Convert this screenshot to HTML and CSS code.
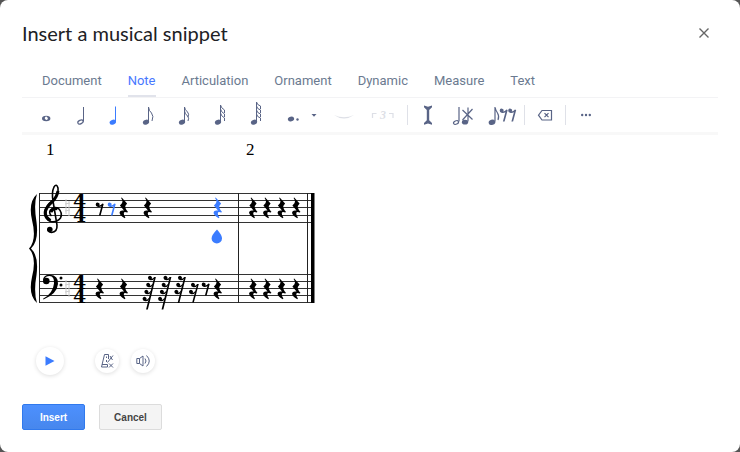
FILE: index.html
```html
<!DOCTYPE html>
<html lang="en">
<head>
<meta charset="utf-8">
<title>Insert a musical snippet</title>
<link rel="stylesheet" href="styles.css">
</head>
<body>
<svg class="defs" width="0" height="0" aria-hidden="true">
  <defs>
    <path id="quarter-rest" d="M-1.8 -10.6L3.6 -4.600Q1.200 -2 1.800 -.6Q2.400 1.400 4.400 3.800L3.900 4.600Q.6 3.400 .3 5Q0 7 1.900 9.400L1.300 10.200Q-4.200 7 -3.900 4.200Q-3.400 1.800 .5 2.600L-3.600 -2.400Q-.8 -5 -1 -6.600Q-1.200 -8.400 -2.400 -10Z"/>
    <path id="eighth-rest" d="M-3.800 -4.600A1.900 1.900 0 1 1 -.3 -3.400Q1.400 -3.500 2.900 -5.400L4.200 -5.100L1.100 6.400H-.6L1.900 -2.700Q0 -1.700 -2 -2.200Q-3.800 -3 -3.800 -4.600Z"/>
    <path id="rest-hook" d="M-4 -1A2 2 0 1 1 -.4 0Q1.200 -.4 2.200 -2L2.900 -1.600Q1.400 1.500 -1.400 1.300Q-4 .9 -4 -1Z"/>
    <g id="sixteenth-rest"><use href="#rest-hook" x="1" y="-9"/><use href="#rest-hook" x="-1" y="-2"/><path d="M3.200 -11H4.800L-.2 7.500H-1.800Z"/></g>
    <g id="thirtysecond-rest"><use href="#rest-hook" x="1" y="-9"/><use href="#rest-hook" x="-.8" y="-2"/><use href="#rest-hook" x="-2.600" y="5"/><path d="M3.200 -11H4.900L-1.700 15H-3.400Z"/></g>
    <g id="sixtyfourth-rest"><use href="#rest-hook" x="1" y="-9"/><use href="#rest-hook" x="-.8" y="-2"/><use href="#rest-hook" x="-2.600" y="5"/><use href="#rest-hook" x="-4.400" y="12"/><path d="M3.200 -11H4.900L-3.200 21.500H-4.900Z"/></g>
  </defs>
</svg>
<main class="dialog">
  <header class="dialog-header">
    <h1>Insert a musical snippet</h1>
    <button class="close" type="button" aria-label="Close"><svg width="10" height="10" viewBox="0 0 10 10"><path d="M.5 .5L9.500 9.500M9.500 .5L.5 9.500"/></svg></button>
  </header>

  <nav class="tabs" aria-label="Tools">
    <button type="button">Document</button>
    <button type="button" class="active">Note</button>
    <button type="button">Articulation</button>
    <button type="button">Ornament</button>
    <button type="button">Dynamic</button>
    <button type="button">Measure</button>
    <button type="button">Text</button>
  </nav>

  <div class="toolbar" role="toolbar" aria-label="Note tools">
    <button type="button" aria-label="Whole note"><svg viewBox="0 0 24 28"><path fill-rule="evenodd" d="M8 17.500a4.200 2.700 0 1 0 8.400 0a4.200 2.700 0 1 0-8.400 0M10.800 16.700q1.200-1.900 2.300-.6q1.400 1.700.4 2.500q-1.100 1-2.200-.3q-.7-.8-.5-1.600"/></svg></button>
    <button type="button" aria-label="Half note"><svg viewBox="0 0 24 28"><ellipse class="line" cx="11.500" cy="21" rx="2.800" ry="1.800" transform="rotate(-25 11.500 21)"/><path class="line thin" d="M14.500 20.500V6"/></svg></button>
    <button type="button" class="selected" aria-label="Quarter note"><svg viewBox="0 0 24 28"><ellipse cx="8.800" cy="21.200" rx="3.300" ry="2.400" transform="rotate(-20 8.800 21.200)"/><path class="line thin" d="M11.500 20.500V5.500"/></svg></button>
    <button type="button" aria-label="Eighth note"><svg viewBox="0 0 24 28"><ellipse cx="7" cy="21.200" rx="3.200" ry="2.400" transform="rotate(-20 7 21.200)"/><path class="line thin" d="M9.500 20.500V6q.5 4 3 6q2.500 3 .5 8"/></svg></button>
    <button type="button" aria-label="Sixteenth note"><svg viewBox="0 0 24 28"><ellipse cx="8" cy="21.200" rx="3.200" ry="2.400" transform="rotate(-20 8 21.200)"/><path class="line thin" d="M10.500 20.500V6q.5 3 3 5q2 2 .5 5M10.500 10q.5 3 3 5q2 2 .5 5"/></svg></button>
    <button type="button" aria-label="Thirty-second note"><svg viewBox="0 0 24 28"><ellipse cx="9" cy="21.200" rx="3.200" ry="2.400" transform="rotate(-20 9 21.200)"/><path class="line thin" d="M11.500 20.500V4q.5 3 4 5v3M11.500 8q.5 3 4 5v3M11.500 12q.5 3 4 5v3"/></svg></button>
    <button type="button" aria-label="Sixty-fourth note"><svg viewBox="0 0 24 28"><ellipse cx="10" cy="21.200" rx="3.200" ry="2.400" transform="rotate(-20 10 21.200)"/><path class="line thin" d="M12.500 20.500V1q.5 3 4 4v3M12.500 5q.5 3 4 4v3M12.500 9q.5 3 4 4v3M12.500 13q.5 3 4 4v3"/></svg></button>
    <button type="button" class="dotted" aria-label="Dotted note"><svg viewBox="0 0 36 28"><ellipse cx="6" cy="18" rx="3.200" ry="2.300" transform="rotate(-15 6 18)"/><circle cx="12.500" cy="18.500" r="1.200"/><path d="M26.500 13h5l-2.500 2.800z"/></svg></button>
    <button type="button" class="faded" aria-label="Tie"><svg viewBox="0 0 24 28"><path d="M2 14q10 4.500 20 0q-10 7-20 0"/></svg></button>
    <button type="button" class="faded" aria-label="Triplet"><svg viewBox="0 0 24 28"><path class="line" d="M1.500 17v-4.500h4M18 12.500h4V17"/><text x="9" y="18">3</text></svg></button>
    <i class="divider"></i>
    <button type="button" aria-label="Voice cursor"><svg viewBox="0 0 24 28"><path d="M8 4.500l4 1.200l4-1.200v1.800l-2.800 2.600v10.400l2.800 2.600v1.800l-4-1.200l-4 1.200v-1.800l2.800-2.600V8.900L8 6.300z"/></svg></button>
    <button type="button" aria-label="Remove note"><svg viewBox="0 0 24 28"><ellipse class="line" cx="5" cy="21.500" rx="2.600" ry="1.700" transform="rotate(-25 5 21.500)"/><path class="line" d="M8 20.500V6M17 6.500v14M11.500 9l10 9.500M21.500 8l-10 11"/><ellipse cx="14" cy="21.200" rx="3.100" ry="2.400"/></svg></button>
    <button type="button" class="wide" aria-label="Replace with rests"><svg viewBox="0 0 30 28"><ellipse cx="6" cy="21.300" rx="3.400" ry="2.600" transform="rotate(-20 6 21.300)"/><path class="line" d="M9 20.500V6q.5 3 2.500 6q2 3 .5 7"/><use href="#eighth-rest" x="17.500" y="14"/><use href="#eighth-rest" x="26" y="14"/></svg></button>
    <i class="divider"></i>
    <button type="button" aria-label="Delete"><svg viewBox="0 0 24 28"><path class="line" d="M9 9.500h9.500v9.500H9L5.500 14.200zM11.500 12.200l4 4M15.500 12.200l-4 4"/></svg></button>
    <i class="divider"></i>
    <button type="button" aria-label="More"><svg viewBox="0 0 24 28"><circle cx="8.200" cy="14" r="1.200"/><circle cx="12" cy="14" r="1.200"/><circle cx="15.800" cy="14" r="1.200"/></svg></button>
  </div>

  <section class="score" aria-label="Score">
    <svg width="300" height="200" viewBox="22 135 300 200">
      <g class="number"><text x="46" y="155">1</text><text x="246" y="155">2</text></g>
      <path class="staff" d="M39 193.500H314M39 200.500H314M39 207.500H314M39 215.500H314M39 222.500H314M39 274.500H314M39 281.500H314M39 288.500H314M39 295.500H314M39 302.500H314"/>
      <path class="bar" d="M39.500 193V303M238.500 193V303M307.500 193V303"/>
      <path d="M311 193h3.500v110H311z"/>
      <path d="M37 194Q28 202 32 220Q37 240 29 248.500Q37 257 32 277Q28 295 37 303Q33.500 292 36.500 275Q39 256 31 248.500Q39 241 36.500 222Q33.500 204 37 194Z"/>
      <path class="clef" d="M51.500 216Q48.500 213 50.500 210Q54 206 58.500 208.500Q63 213 60.500 218Q57 222.500 51 221.500Q44 219 44.500 212Q46 206 52.500 200.500Q59 194 58 188Q56.500 183 54 187Q51.500 192 53 201L57 225Q57.500 232 51.500 232.500Q48 232 48 229"/>
      <path class="clef heavy" d="M50.500 220.500Q44.500 217 45.500 211Q47 206 52.500 201.500Q57 197 58 191M50.800 212Q53 207.500 57.500 208.800"/>
      <circle cx="49.800" cy="229.500" r="2.800"/>
      <path d="M43 280.500Q43 274.800 50 274.800Q58.500 275.500 58 284Q57 294 43.500 299.500L43 298.800Q53 293.500 54 283.500Q54.500 276 49.500 276Q45.500 276 44.500 279Z"/>
      <circle cx="46.300" cy="281" r="3.300"/><circle cx="61" cy="278" r="1.500"/><circle cx="61" cy="285" r="1.500"/>
      <path class="ghost" d="M66 199V214M69 201V216M65 204l5-1M65 211l5-1M66 280V295M69 282V297M65 285l5-1M65 292l5-1"/>
      <g class="time"><text x="73" y="208">4</text><text x="73" y="222">4</text><text x="73" y="289">4</text><text x="73" y="303">4</text></g>
      <use href="#eighth-rest" x="99.500" y="209"/><use class="blue" href="#eighth-rest" x="111.500" y="209"/>
      <use href="#quarter-rest" x="123.500" y="208"/><use href="#quarter-rest" x="147.500" y="208"/><use class="blue" href="#quarter-rest" x="217.500" y="208"/>
      <use href="#quarter-rest" x="253" y="208"/><use href="#quarter-rest" x="267" y="208"/><use href="#quarter-rest" x="281.500" y="208"/><use href="#quarter-rest" x="296" y="208"/>
      <use href="#quarter-rest" x="99.500" y="289"/><use href="#quarter-rest" x="123.500" y="289"/>
      <use href="#sixtyfourth-rest" x="151" y="288"/><use href="#sixtyfourth-rest" x="166.500" y="288"/><use href="#thirtysecond-rest" x="181" y="288"/><use href="#sixteenth-rest" x="194" y="295"/><use href="#eighth-rest" x="205.500" y="289"/>
      <use href="#quarter-rest" x="217.500" y="289"/>
      <use href="#quarter-rest" x="253" y="289"/><use href="#quarter-rest" x="267" y="289"/><use href="#quarter-rest" x="281.500" y="289"/><use href="#quarter-rest" x="296" y="289"/>
      <path class="blue" d="M217 229.500Q222 235 222 238.500A5.200 5 0 0 1 211.600 238.500Q211.600 235 217 229.500Z"/>
    </svg>
  </section>

  <div class="player">
    <button type="button" class="play" aria-label="Play"><svg width="10" height="10" viewBox="0 0 10 10"><path d="M.5 .3L9.500 5L.5 9.700z"/></svg></button>
    <button type="button" aria-label="Metronome"><svg width="14" height="16" viewBox="0 0 14 16"><path d="M8.500 6V1.500H4.500L1.500 14H7.500V11.500H2M6.500 3.500v1.500M6.500 7v2M7.500 9.500L13 2.500M10 3l2.500 4M9 10.500l4 4M13 10.500l-4 4"/></svg></button>
    <button type="button" aria-label="Volume"><svg width="14" height="14" viewBox="0 0 14 14"><path d="M.8 4.500H3.500v5H.8zM3.500 4.500L7 2v10L3.500 9.500M9 4.500q2 2.500 0 5M10.500 1.500q5.500 5.500 0 11"/></svg></button>
  </div>

  <footer class="actions">
    <button type="button" class="primary">Insert</button>
    <button type="button">Cancel</button>
  </footer>
</main>
</body>
</html>
```
FILE: styles.css
```css
* { box-sizing: border-box; }
body { margin: 0; background: #555; font-family: Roboto, sans-serif; }
button { border: 0; padding: 0; background: none; font: inherit; color: inherit; }
svg { display: block; overflow: visible; }
.defs { position: absolute; }
.dialog { min-height: 100vh; padding: 20px 22px 22px; background: #fff; border-radius: 8px; }
.dialog-header { display: flex; align-items: center; justify-content: space-between; height: 26px; }
h1 { margin: 0; font: 400 20px/26px Lato, sans-serif; color: #202124; }
.close { width: 28px; height: 28px; display: grid; place-items: center; stroke: #666; stroke-width: 1.4; }
.tabs { display: flex; gap: 26px; height: 52px; padding: 21px 20px 0; border-bottom: 1px solid #f3f3f5; font-size: 13px; color: #6b7a90; }
.tabs button { height: 30px; padding-bottom: 2px; border-bottom: 2px solid transparent; }
.tabs .active { color: #4778ff; border-color: #e1e3eb; }
.toolbar { display: flex; align-items: center; height: 37px; padding-left: 12px; gap: 11px; border-bottom: 3px solid #f8f8f8; color: #596486; fill: currentColor; }
.toolbar button { width: 24px; height: 28px; flex: none; }
.toolbar .dotted { width: 36px; margin-left: 6px; }
.toolbar .wide { width: 30px; }
.toolbar .selected { fill: #3b7cff; color: #3b7cff; }
.line { fill: none; stroke: currentColor; stroke-width: 1.2; }
.thin { stroke-width: 1; }
.toolbar .faded { opacity: .2; margin-right: 4px; }
.faded text { font: italic bold 12px "Liberation Serif", serif; }
.divider { width: 1px; height: 20px; margin: 0 -3px; background: #dfe1e8; }
.score { height: 211px; overflow: hidden; }
.number { font: 17px "Liberation Serif", serif; }
.staff { stroke: #333; stroke-width: 1; }
.bar { stroke: #222; stroke-width: 1; }
.clef { fill: none; stroke: #000; stroke-width: 1.6; }
.heavy { stroke-width: 3; }
.ghost { stroke: #ccc; fill: none; }
.time { font: bold 19px "DejaVu Serif", serif; }
.blue { fill: #3b7cff; }
.player { display: flex; align-items: center; height: 30px; padding-left: 14px; gap: 12px; }
.player button { width: 24px; height: 24px; display: grid; place-items: center; border-radius: 50%; box-shadow: 0 1px 4px #0002; fill: none; stroke: #596486; }
.player .play { width: 28px; height: 28px; margin-right: 19px; fill: #3b7cff; stroke: none; }
.actions { display: flex; gap: 14px; margin-top: 28px; }
.actions button { width: 63px; height: 26px; border: 1px solid #dcdcdc; border-radius: 2px; background: #f4f4f4; color: #444; font: bold 10px "Liberation Sans", sans-serif; }
.actions .primary { border-color: #3079ed; background: linear-gradient(#4d90fe, #4787ed); color: #fff; }
```
